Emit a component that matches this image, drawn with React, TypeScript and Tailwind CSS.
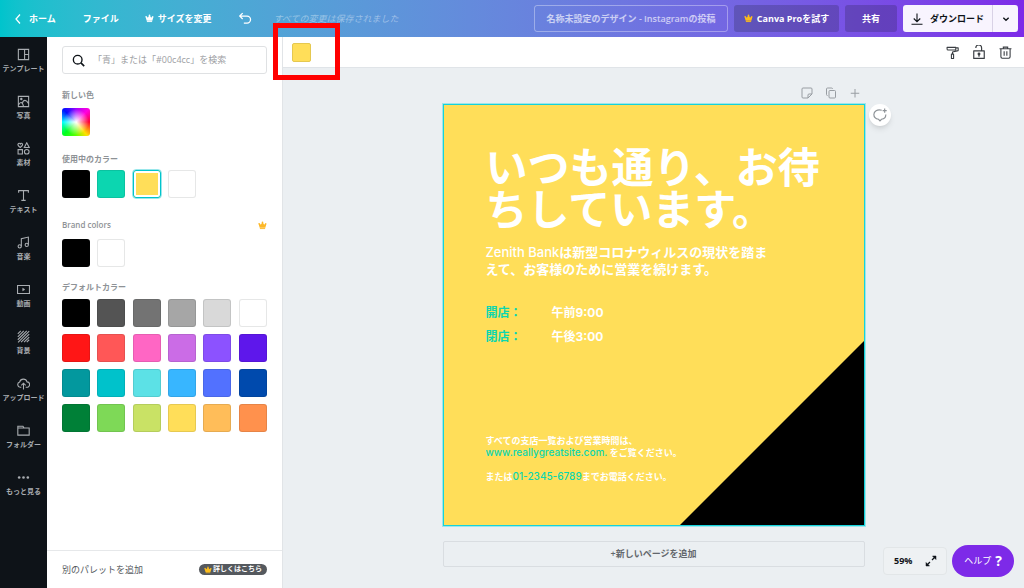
import React from 'react'
import type { ReactNode } from 'react'

const inUseColors = ['#000000', '#0cd6b0', '#ffde59', '#ffffff']
const brandColors = ['#000000', '#ffffff']
const defaultColors = [
  '#000000', '#545454', '#737373', '#a6a6a6', '#d9d9d9', '#ffffff',
  '#ff1616', '#ff5757', '#ff66c4', '#cb6ce6', '#8c52ff', '#5e17eb',
  '#03989e', '#00c2cb', '#5ce1e6', '#38b6ff', '#5271ff', '#004aad',
  '#008037', '#7ed957', '#c9e265', '#ffde59', '#ffbd59', '#ff914d'
]

interface IconProps {
  className?: string
  children?: ReactNode
}

function Icon({ className = 'size-4', children }: IconProps) {
  return (
    <svg className={className} fill="none" stroke="currentColor" strokeWidth={2} viewBox="0 0 24 24" aria-hidden="true">
      {children}
    </svg>
  )
}

function Crown({ className }: IconProps) {
  return (
    <svg className={className} fill="currentColor" viewBox="0 0 24 24" aria-hidden="true">
      <path d="M1 7.500a2 2 0 013.500-1.300L7.500 10 10.300 5.500a2.300 2.300 0 113.400 0L16.500 10l3-3.800A2 2 0 1122 9.500L19.500 18h-15L2 9.500a2 2 0 01-1-2z" />
      <path d="M5 19h14v2.500H5z" />
    </svg>
  )
}

const navItems: { label: string; icon: ReactNode }[] = [
  {
    label: 'テンプレート',
    icon: <path d="M2.500 2.500h19v19h-19zM14 2.500v19M14 12h7.500" />
  },
  {
    label: '写真',
    icon: (
      <>
        <path d="M2.500 2.500h19v19h-19zM3 18c3-6 7-6 9 3M10 15c2-7 7-7 11.500 1" />
        <circle cx="8" cy="7.500" r="1.200" fill="currentColor" />
      </>
    )
  },
  {
    label: '素材',
    icon: (
      <>
        <path d="M6 10C2 7.500 1 5.500 2 3.500 3 1.500 5.500 2 6 3.500 6.500 2 9 1.500 10 3.500 11 5.500 10 7.500 6 10zM18 1.500l4.500 8.500h-9zM2 14h8v8H2z" />
        <circle cx="18" cy="18" r="4.300" />
      </>
    )
  },
  {
    label: 'テキスト',
    icon: <path d="M3 7V3h18v4M12 3v18M8 21h8" />
  },
  {
    label: '音楽',
    icon: (
      <>
        <path d="M8 19V5l13-3v14" />
        <circle cx="5" cy="19" r="3" />
        <circle cx="18" cy="16.500" r="3" />
      </>
    )
  },
  {
    label: '動画',
    icon: (
      <>
        <path d="M1 4.500h22v15H1z" />
        <path d="M10.500 9.500l4 2.500-4 2.500z" fill="currentColor" strokeWidth={1} />
      </>
    )
  },
  {
    label: '背景',
    icon: <path d="M1.500 7L7 1.500M1.500 12.500l11-11M1.500 18L18 1.500M2 23L22.500 2M7.500 22.500l15-15M13 22.500l9.500-9.500M18 22.500l4.500-4.500" />
  },
  {
    label: 'アップロード',
    icon: <path d="M8 19H6a5 5 0 01-1-9.800A7 7 0 0118.500 9 5 5 0 0118 19h-2M12 23V12M8 15.500l4-4 4 4" />
  },
  {
    label: 'フォルダー',
    icon: <path d="M1.500 20.500V4H11l2 3.500h9.500v13zM1.500 7.500H13" />
  },
  {
    label: 'もっと見る',
    icon: (
      <g fill="currentColor" stroke="none">
        <circle cx="4" cy="12" r="2.400" />
        <circle cx="12" cy="12" r="2.400" />
        <circle cx="20" cy="12" r="2.400" />
      </g>
    )
  }
]

function TopBar() {
  return (
    <header className="flex h-[37px] shrink-0 items-center bg-gradient-to-r from-[#00c4cc] to-[#7d2ae8] pl-3 pr-[6px] text-[9px] font-bold text-white">
      <a href="#home" className="flex items-center gap-[5px]">
        <Icon className="size-3">
          <path d="M16 3l-8 9 8 9" strokeWidth={2.500} />
        </Icon>
        ホーム
      </a>
      <button className="ml-[27px]">ファイル</button>
      <button className="ml-[26px] flex items-center gap-1">
        <Crown className="size-[9px]" />
        サイズを変更
      </button>
      <button className="ml-[27px]" aria-label="元に戻す">
        <Icon className="size-[14px]">
          <path d="M8 2L3 7l5 5M3 7h12.500a6 6 0 010 12H10" strokeWidth={2.200} />
        </Icon>
      </button>
      <span className="ml-[21px] whitespace-nowrap font-normal italic text-white/40">すべての変更は保存されました</span>

      <div className="ml-auto flex items-center gap-[6px]">
        <input
          aria-label="デザインのタイトル"
          defaultValue="名称未設定のデザイン - Instagramの投稿"
          className="h-[27px] w-[194px] rounded-[3px] border border-white/35 bg-transparent px-1 text-center font-semibold text-white/65 outline-none"
        />
        <button className="flex h-[27px] w-[105px] items-center justify-center gap-1 rounded-[3px] bg-[#0e1318]/20">
          <Crown className="size-[9px] text-[#fdbc1b]" />
          Canva Proを試す
        </button>
        <button className="h-[27px] w-[52px] rounded-[3px] bg-[#0e1318]/20">共有</button>
        <div className="flex h-[27px] overflow-hidden rounded-[3px] bg-[#f8f4fe] text-[#0e1318]">
          <button className="flex w-[89px] items-center justify-center gap-[7px]">
            <Icon className="size-3">
              <path d="M12 1v16M5.500 11l6.500 6.500 6.500-6.500M1 22.500h22" strokeWidth={2.200} />
            </Icon>
            ダウンロード
          </button>
          <button className="flex w-[26px] items-center justify-center border-l border-[#d9d2e6]" aria-label="ダウンロードのオプション">
            <Icon className="size-2">
              <path d="M4 8l8 8 8-8" strokeWidth={4} />
            </Icon>
          </button>
        </div>
      </div>
    </header>
  )
}

function SideNav() {
  return (
    <nav className="w-[47px] shrink-0 bg-[#0e1318] text-[#a9adb1]">
      {navItems.map((item) => (
        <button key={item.label} className="flex h-[47px] w-full flex-col items-center pt-[11px]">
          <Icon className="size-[13px]">{item.icon}</Icon>
          <span className="mt-[2px] whitespace-nowrap text-[7px] leading-[11px] font-semibold">{item.label}</span>
        </button>
      ))}
    </nav>
  )
}

interface SwatchGridProps {
  colors: string[]
  selected?: string
}

function SwatchGrid({ colors, selected }: SwatchGridProps) {
  return (
    <div className="grid grid-cols-6 justify-items-start gap-[7px]">
      {colors.map((color, i) => (
        <button
          key={i}
          aria-label={color}
          className={`size-7 rounded-[3px] border ${
            color === selected ? 'border-[#00c4cc] ring-2 ring-inset ring-white outline outline-[#00c4cc]/40' : 'border-[#0e1318]/10'
          }`}
          style={{ backgroundColor: color }}
        />
      ))}
    </div>
  )
}

function ColorPanel() {
  return (
    <aside className="flex w-[236px] shrink-0 flex-col border-r border-[#e1e4e7] bg-white">
      <div className="flex-1 px-[15px] pt-[9px] text-[8px] leading-3 font-semibold text-[#8e9296]">
        <label className="flex h-7 items-center gap-2 rounded-[3px] border border-[#dfe1e3] pl-[9px]">
          <Icon className="size-[13px] text-[#0e1318]">
            <circle cx="10.500" cy="10.500" r="8" strokeWidth={2.500} />
            <path d="M16.500 16.500L22.500 22.500" strokeWidth={3} />
          </Icon>
          <input
            aria-label="色を検索"
            placeholder="「青」または「#00c4cc」を検索"
            className="min-w-0 flex-1 text-[9px] font-normal outline-none placeholder:text-[#9da0a3]"
          />
        </label>

        <h2 className="mt-[15px] mb-[7px]">新しい色</h2>
        <button
          aria-label="新しい色を追加"
          className="block size-7 rounded-[3px] bg-[radial-gradient(circle,white,transparent_65%),conic-gradient(#a000ff,#ff00e0_45deg,#ff0030_90deg,#ffe000_140deg,#60ff00_180deg,#00ff20_225deg,#00ffff_270deg,#0010ff_315deg,#a000ff)]"
        />

        <h2 className="mt-[17px] mb-[5px]">使用中のカラー</h2>
        <SwatchGrid colors={inUseColors} selected="#ffde59" />

        <div className="mt-[21px] mb-2 flex items-center justify-between">
          <h2>Brand colors</h2>
          <Crown className="size-[9px] text-[#fdb827]" />
        </div>
        <SwatchGrid colors={brandColors} />

        <h2 className="mt-[14px] mb-[6px]">デフォルトカラー</h2>
        <SwatchGrid colors={defaultColors} />
      </div>

      <div className="flex h-[38px] items-center justify-between border-t border-[#e6e8ea] px-[15px]">
        <button className="text-[9px] text-[#55595e]">別のパレットを追加</button>
        <a href="#learn-more" className="flex h-[11px] items-center gap-px rounded-full bg-[#55595e] px-[5px] text-[7px] font-bold text-white">
          <Crown className="size-2 text-[#fdbc1b]" />
          詳しくはこちら
        </a>
      </div>
    </aside>
  )
}

function EditorToolbar() {
  return (
    <div className="flex h-[31px] shrink-0 items-center justify-between border-b border-[#e0e4e8] bg-white pl-[9px] pr-3 text-[#3a3e43]">
      <button aria-label="選択中の色" className="size-[19px] rounded-[2px] border border-[#e5c850] bg-[#ffde59]" />
      <div className="flex items-center gap-[13px]">
        <button aria-label="スタイルをコピー">
          <Icon className="size-[13px]">
            <path d="M2 2.500h16v5H4q-2 0-2-2zM18 3.500h4.500v5L12 11v4M10 15h4v8h-4z" strokeLinejoin="round" />
          </Icon>
        </button>
        <button aria-label="ロック">
          <Icon className="size-[14px]">
            <path d="M3 10h18v13H3zM6.500 5a5 5 0 0110 0v5M12 16v4" strokeLinejoin="round" />
            <circle cx="12" cy="15.500" r="1.500" fill="currentColor" />
          </Icon>
        </button>
        <button aria-label="削除">
          <Icon className="size-[13px]">
            <path d="M1 5h22M8 5V2h8v3M3.500 5v15q0 2.500 2.500 2.500h12q2.500 0 2.500-2.500V5M9.500 9.500v8.500M14.500 9.500v8.500" />
          </Icon>
        </button>
      </div>
    </div>
  )
}

function DesignPage() {
  return (
    <article className="relative h-[422px] w-full border border-[#14d3dc] bg-[#ffde59] pl-[42px] pt-[41px] text-white shadow-[0_0_0_1px_rgba(20,211,220,0.35)]">
      <svg className="absolute bottom-0 right-0 size-[184px]" viewBox="0 0 184 184" aria-hidden="true">
        <path d="M184 0v184H0z" fill="#000000" />
      </svg>

      <h1 className="whitespace-nowrap text-[42px] leading-[42px] font-bold">
        いつも通り、お待
        <br />
        ちしています。
      </h1>
      <p className="mt-[14px] whitespace-nowrap text-[13px] leading-[17px] font-bold">
        <span className="font-['Inter'] font-medium">Zenith Bank</span>は新型コロナウィルスの現状を踏ま
        <br />
        えて、お客様のために営業を続けます。
      </p>
      <dl className="mt-[23px] grid grid-cols-[66px_auto] text-[12px] leading-6 font-bold">
        <dt className="text-[#0cd6b0]">開店：</dt>
        <dd>午前<span className="font-['Inter']">9:00</span></dd>
        <dt className="text-[#0cd6b0]">閉店：</dt>
        <dd>午後<span className="font-['Inter']">3:00</span></dd>
      </dl>
      <div className="mt-[86px] whitespace-nowrap text-[9px] leading-3 font-bold">
        <p className="h-3">すべての支店一覧および営業時間は、</p>
        <p className="h-3">
          <a href="#site" className="font-['Inter'] text-[10px] leading-none font-medium text-[#0cd6b0]">www.reallygreatsite.com.</a> をご覧ください。
        </p>
        <p className="mt-3 h-3">
          または<a href="#tel" className="font-['Inter'] text-[10px] leading-none font-medium text-[#0cd6b0]">01-2345-6789</a>までお電話ください。
        </p>
      </div>

      <button
        aria-label="コメントを追加"
        className="absolute -right-[27px] -top-px flex size-[22px] items-center justify-center rounded-full bg-white text-[#8d9297] shadow-md"
      >
        <Icon className="size-[14px]">
          <path d="M15 3.800C7 1.500 1.500 6 1.500 11c0 4.500 3.500 7.500 8 8.300L12 22l2.500-2.700c5-.8 7.500-4 7.500-8.300M20 1v7M16.500 4.500h7" />
        </Icon>
      </button>
    </article>
  )
}

function Canvas() {
  return (
    <section className="relative flex flex-1 flex-col items-center bg-[#ebeff2]">
      <div className="w-[422px]">
        <div className="flex h-9 items-center justify-end gap-3 pt-[13px] pr-1 text-[#989da2]">
          <button aria-label="メモ">
            <Icon className="size-3">
              <path d="M4 2h16q2 0 2 2v10l-8 8H4q-2 0-2-2V4q0-2 2-2zM22 14h-6q-2 0-2 2v6" />
            </Icon>
          </button>
          <button aria-label="ページを複製">
            <Icon className="size-3">
              <path d="M10 7h9q2 0 2 2v11q0 2-2 2h-9q-2 0-2-2V9q0-2 2-2zM5 17q-2 0-2-2V4q0-2 2-2h8q2 0 2 2" />
            </Icon>
          </button>
          <button aria-label="ページを追加">
            <Icon className="size-3">
              <path d="M12 4v17M3.500 12.500h17" />
            </Icon>
          </button>
        </div>
        <DesignPage />
        <button className="mt-[15px] h-[26px] w-full rounded-[2px] border border-[#d9dde1] text-[9px] font-semibold text-[#63676c]">
          +新しいページを追加
        </button>
      </div>

      <div className="absolute bottom-[11px] right-[10px] flex items-center gap-[5px]">
        <div className="flex h-7 w-[64px] items-center justify-between rounded-[4px] border border-[#e2e6e8] bg-[#eef1f3] pl-[10px] pr-[9px] text-[#0e1318]">
          <button className="text-[9px] font-bold">59%</button>
          <button aria-label="全画面表示">
            <Icon className="size-3">
              <path d="M15 2h7v7zM2 15v7h7z" fill="currentColor" strokeWidth={1} />
              <path d="M14 10l6-6M4 20l6-6" strokeWidth={2.500} />
            </Icon>
          </button>
        </div>
        <button className="flex h-8 w-[62px] items-center justify-center gap-1 rounded-full bg-[#7d2ae8] text-[9px] text-white">
          ヘルプ
          <span className="text-[14px] leading-none font-bold">?</span>
        </button>
      </div>
    </section>
  )
}

export default function App() {
  return (
    <div lang="ja" className="relative flex h-screen flex-col overflow-hidden font-['Open_Sans','Noto_Sans_CJK_JP',sans-serif]">
      <TopBar />
      <div className="flex min-h-0 flex-1">
        <SideNav />
        <ColorPanel />
        <main className="flex min-w-0 flex-1 flex-col">
          <EditorToolbar />
          <Canvas />
        </main>
      </div>
      {/* callout around the selected color */}
      <div className="pointer-events-none absolute left-[273px] top-[23px] h-[57px] w-[67px] border-5 border-[#ff0000]" />
    </div>
  )
}
